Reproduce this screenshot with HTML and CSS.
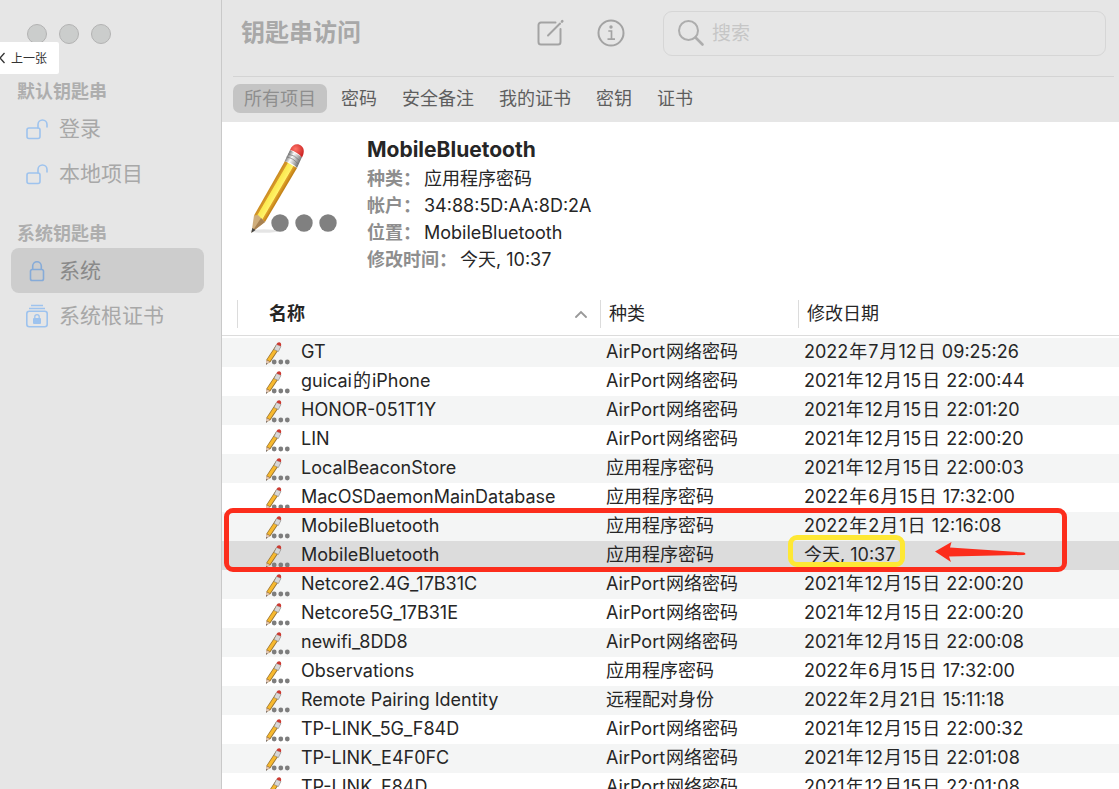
FILE: index.html
```html
<!DOCTYPE html>
<html lang="zh-CN">
<head>
<meta charset="utf-8">
<title>钥匙串访问</title>
<link rel="stylesheet" href="styles.css">
</head>
<body>
<svg class="defs" aria-hidden="true">
  <defs>
    <linearGradient id="wood" gradientUnits="userSpaceOnUse" x1="20.500" y1="46" x2="32.500" y2="53">
      <stop offset="0" stop-color="#c98a1e"/><stop offset=".2" stop-color="#d99a2a"/>
      <stop offset=".26" stop-color="#fbe94f"/><stop offset=".66" stop-color="#fff36a"/>
      <stop offset=".72" stop-color="#e0a12a"/><stop offset="1" stop-color="#b9770f"/>
    </linearGradient>
    <linearGradient id="metal" gradientUnits="userSpaceOnUse" x1="38" y1="14" x2="50" y2="21">
      <stop offset="0" stop-color="#777"/><stop offset=".35" stop-color="#fafafa"/>
      <stop offset=".7" stop-color="#b5b5b5"/><stop offset="1" stop-color="#777"/>
    </linearGradient>
    <radialGradient id="eraser" cx=".4" cy=".35" r=".7">
      <stop offset="0" stop-color="#ff7468"/><stop offset="1" stop-color="#c91f1f"/>
    </radialGradient>
    <symbol id="unlock" viewBox="0 0 24 24">
      <g fill="none" stroke="#9ec3ee" stroke-width="1.6" stroke-linecap="round"><rect x="2" y="11" width="13" height="10.5" rx="2"/><path d="M13 11V7.5a4.5 4.5 0 0 1 9 0V10"/></g>
    </symbol>
    <symbol id="row-icon" viewBox="0 0 25 24">
      <path d="M11 4 15.500 6 5.500 21 1 23.500 1.200 19Z" fill="#96702f"/>
      <path d="M11.600 4.500 14.500 6 4.900 20.300 2.100 18.800Z" fill="#f7b92f"/>
      <path d="M1.200 19 5 21 1 23.500Z" fill="#e0c4b2"/>
      <path d="M1 23.700 1.200 22 2.500 22.700Z" fill="#555"/>
      <path d="M11.500 3.400 16 5.300 13.400 10.500 9 8.500Z" fill="#d8d8d8" stroke="#777" stroke-width=".5"/>
      <path d="M11.500 3.400C12.500 0 17.300.6 16 5.200Z" fill="#cc3a31"/>
      <g fill="#7d7d7d"><circle cx="9.200" cy="21" r="2.400"/><circle cx="15.800" cy="21" r="2.400"/><circle cx="22.300" cy="21" r="2.400"/></g>
    </symbol>
  </defs>
</svg>

<div class="app">
  <aside class="sidebar">
    <div class="lights"><i></i><i></i><i></i></div>
    <nav>
      <h2>默认钥匙串</h2>
      <ul>
        <li><a href="#"><svg class="side-icon"><use href="#unlock"/></svg>登录</a></li>
        <li><a href="#"><svg class="side-icon"><use href="#unlock"/></svg>本地项目</a></li>
      </ul>
      <h2>系统钥匙串</h2>
      <ul>
        <li><a href="#" class="current" aria-current="page"><svg class="side-icon" viewBox="0 0 24 24"><g fill="none" stroke="#86abd8" stroke-width="1.6"><rect x="5.500" y="10.500" width="13" height="11" rx="1.800"/><path d="M7.700 10.500V7a4.300 4.300 0 0 1 8.600 0v3.500"/></g></svg>系统</a></li>
        <li><a href="#"><svg class="side-icon" viewBox="0 0 24 24"><g fill="none" stroke="#9ec3ee"><path d="M6 1.500h12M4 4.500h16" stroke-width="1.300"/><rect x="1.800" y="7.300" width="20.400" height="15.400" rx="2.500" stroke-width="1.600"/><path d="M9.800 14.500v-1.700a2.200 2.200 0 0 1 4.400 0v1.700" stroke-width="1.300"/></g><rect x="8" y="14" width="8" height="6" rx="1" fill="#9ec3ee"/></svg>系统根证书</a></li>
      </ul>
    </nav>
    <button class="previous" type="button"><svg viewBox="0 0 6 12"><path d="M4.500 1 0 6l4.500 5" fill="none" stroke="#333" stroke-width="1.300"/></svg>上一张</button>
  </aside>

  <main class="main">
    <header class="top">
      <div class="toolbar">
        <h1>钥匙串访问</h1>
        <button type="button" class="tool" aria-label="新建"><svg viewBox="0 0 30 30"><g fill="none" stroke="#a3a3a3" stroke-width="2" stroke-linecap="round" stroke-linejoin="round"><path d="M20.500 4.500H6A2.500 2.500 0 0 0 3.500 7v17A2.500 2.500 0 0 0 6 26.500h17a2.500 2.500 0 0 0 2.500-2.500V11"/><path d="M13 17.500 25 5.500"/><path d="M27 3.500l.3-.3" stroke-width="2.600"/></g></svg></button>
        <button type="button" class="tool" aria-label="简介"><svg viewBox="0 0 30 30"><circle cx="15" cy="15" r="12.500" fill="none" stroke="#a3a3a3" stroke-width="2"/><circle cx="15" cy="9" r="1.700" fill="#a3a3a3"/><path d="M12.300 13h3.200v8M11.500 21.200h7.500" fill="none" stroke="#a3a3a3" stroke-width="1.700"/></svg></button>
        <label class="search"><svg viewBox="0 0 28 28"><circle cx="11.500" cy="11.500" r="9.500" fill="none" stroke="#adadad" stroke-width="2"/><path d="M18.500 18.500l7 7" stroke="#adadad" stroke-width="2.600" stroke-linecap="round"/></svg><input type="text" placeholder="搜索" aria-label="搜索"></label>
      </div>
      <div class="tabs">
        <button type="button" class="active">所有项目</button><button type="button">密码</button><button type="button">安全备注</button><button type="button">我的证书</button><button type="button">密钥</button><button type="button">证书</button>
      </div>
    </header>

    <section class="detail">
      <svg class="big-icon" viewBox="0 0 90 92">
        <ellipse cx="15" cy="89" rx="14" ry="1.800" fill="#000" opacity=".1"/>
        <path d="M36 19 48 26 16 80 5 73.500Z" fill="url(#wood)"/>
        <path d="M5 73.500 9 73l3 3 4 4L2.500 90.500Z" fill="#cfae7c"/>
        <path d="M12 76l4 4L2.500 90.500Z" fill="#a88252"/>
        <path d="M2.300 91 3.300 86 6.500 88Z" fill="#444"/>
        <path d="M41 8 53 15 48 26Q43 20 35.500 19.500Z" fill="url(#metal)"/>
        <path d="M39 12q7 1 12 7M37.500 15q7 1 11.500 7" fill="none" stroke="#777" stroke-width=".7"/>
        <path d="M41 8C43 2 49 1 52.500 4S55 12 53 15.500Q48 9.500 41 8Z" fill="url(#eraser)"/>
        <g fill="#808080"><circle cx="31" cy="81" r="8.700"/><circle cx="55" cy="81" r="8.700"/><circle cx="79" cy="81" r="8.700"/></g>
      </svg>
      <div class="facts">
        <h2>MobileBluetooth</h2>
        <dl>
          <div><dt>种类：</dt><dd>应用程序密码</dd></div>
          <div><dt>帐户：</dt><dd>34:88:5D:AA:8D:2A</dd></div>
          <div><dt>位置：</dt><dd>MobileBluetooth</dd></div>
          <div><dt>修改时间：</dt><dd>今天, 10:37</dd></div>
        </dl>
      </div>
    </section>

    <section class="items">
      <table>
        <colgroup><col class="c-name"><col class="c-kind"><col></colgroup>
        <thead><tr><th class="sorted"><span>名称<svg viewBox="0 0 14 8"><path d="M2 7l5-5 5 5" fill="none" stroke="#999" stroke-width="1.800" stroke-linecap="round"/></svg></span></th><th><span>种类</span></th><th><span>修改日期</span></th></tr></thead>
        <tbody>
          <tr><td><svg><use href="#row-icon"/></svg>GT</td><td>AirPort<b>网络密码</b></td><td>2022<b>年</b>7<b>月</b>12<b>日</b> 09:25:26</td></tr>
          <tr><td><svg><use href="#row-icon"/></svg>guicai<b>的</b>iPhone</td><td>AirPort<b>网络密码</b></td><td>2021<b>年</b>12<b>月</b>15<b>日</b> 22:00:44</td></tr>
          <tr><td><svg><use href="#row-icon"/></svg>HONOR-051T1Y</td><td>AirPort<b>网络密码</b></td><td>2021<b>年</b>12<b>月</b>15<b>日</b> 22:01:20</td></tr>
          <tr><td><svg><use href="#row-icon"/></svg>LIN</td><td>AirPort<b>网络密码</b></td><td>2021<b>年</b>12<b>月</b>15<b>日</b> 22:00:20</td></tr>
          <tr><td><svg><use href="#row-icon"/></svg>LocalBeaconStore</td><td>应用程序密码</td><td>2021<b>年</b>12<b>月</b>15<b>日</b> 22:00:03</td></tr>
          <tr><td><svg><use href="#row-icon"/></svg>MacOSDaemonMainDatabase</td><td>应用程序密码</td><td>2022<b>年</b>6<b>月</b>15<b>日</b> 17:32:00</td></tr>
          <tr><td><svg><use href="#row-icon"/></svg>MobileBluetooth</td><td>应用程序密码</td><td>2022<b>年</b>2<b>月</b>1<b>日</b> 12:16:08</td></tr>
          <tr class="selected"><td><svg><use href="#row-icon"/></svg>MobileBluetooth</td><td>应用程序密码</td><td>今天, 10:37</td></tr>
          <tr><td><svg><use href="#row-icon"/></svg>Netcore2.4G_17B31C</td><td>AirPort<b>网络密码</b></td><td>2021<b>年</b>12<b>月</b>15<b>日</b> 22:00:20</td></tr>
          <tr><td><svg><use href="#row-icon"/></svg>Netcore5G_17B31E</td><td>AirPort<b>网络密码</b></td><td>2021<b>年</b>12<b>月</b>15<b>日</b> 22:00:20</td></tr>
          <tr><td><svg><use href="#row-icon"/></svg>newifi_8DD8</td><td>AirPort<b>网络密码</b></td><td>2021<b>年</b>12<b>月</b>15<b>日</b> 22:00:08</td></tr>
          <tr><td><svg><use href="#row-icon"/></svg>Observations</td><td>应用程序密码</td><td>2022<b>年</b>6<b>月</b>15<b>日</b> 17:32:00</td></tr>
          <tr><td><svg><use href="#row-icon"/></svg>Remote Pairing Identity</td><td>远程配对身份</td><td>2022<b>年</b>2<b>月</b>21<b>日</b> 15:11:18</td></tr>
          <tr><td><svg><use href="#row-icon"/></svg>TP-LINK_5G_F84D</td><td>AirPort<b>网络密码</b></td><td>2021<b>年</b>12<b>月</b>15<b>日</b> 22:00:32</td></tr>
          <tr><td><svg><use href="#row-icon"/></svg>TP-LINK_E4F0FC</td><td>AirPort<b>网络密码</b></td><td>2021<b>年</b>12<b>月</b>15<b>日</b> 22:01:08</td></tr>
          <tr><td><svg><use href="#row-icon"/></svg>TP-LINK_F84D</td><td>AirPort<b>网络密码</b></td><td>2021<b>年</b>12<b>月</b>15<b>日</b> 22:01:08</td></tr>
        </tbody>
      </table>
      <div class="mark-red"></div>
      <div class="mark-yellow"></div>
      <svg class="mark-arrow" viewBox="0 0 92 20"><path d="M0 9.500 16.500 0 15 5.500 89 10.500Q92 12 89 13L14 14.500 16 20Z" fill="#fc2d1c"/></svg>
    </section>
  </main>
</div>
</body>
</html>
```

FILE: styles.css
```css
* { box-sizing: border-box; }
body {
  margin: 0;
  font: 18px/27px Inter, "Noto Sans CJK SC", sans-serif;
  color: #262626;
  background: #fff;
}
h1, h2, ul, dl, dd { margin: 0; padding: 0; }
ul { list-style: none; }
button, input { font: inherit; color: inherit; border: 0; padding: 0; background: none; }
a { color: inherit; text-decoration: none; }
svg { display: block; flex: none; }
.defs { position: absolute; width: 0; height: 0; }

.app { display: flex; height: 100vh; overflow: hidden; }

.sidebar {
  position: relative;
  flex: none;
  width: 222px;
  padding: 24px 17px 0 11px;
  background: #e6e6e6;
  border-right: 1px solid #c9c9c9;
  color: #a8a8a8;
}
.lights { display: flex; gap: 12px; padding-left: 16px; margin-bottom: 34px; }
.lights i { width: 20px; height: 20px; border-radius: 50%; background: #cbcdcc; border: 1px solid #b3b3b3; }
.sidebar h2 { padding-left: 6px; font-size: 18px; line-height: 28px; font-weight: 700; color: #aeaeae; }
.sidebar ul { margin-bottom: 24px; }
.sidebar li a {
  display: flex;
  align-items: center;
  gap: 10px;
  height: 45px;
  padding-left: 14px;
  border-radius: 8px;
  font-size: 21px;
}
.sidebar .current { background: #cdcdcd; color: #8a8a8a; }
.side-icon { width: 24px; height: 24px; }
.previous {
  position: absolute;
  left: 0;
  top: 42px;
  display: flex;
  align-items: center;
  gap: 5px;
  width: 59px;
  height: 32px;
  background: #fff;
  color: #333;
  font-size: 12px;
  border-radius: 0 2px 2px 0;
}
.previous svg { width: 6px; height: 12px; }

.main { flex: 1; min-width: 0; }
.top { height: 122px; padding: 0 5px 0 11px; background: #e6e6e6; }
.toolbar { display: flex; align-items: center; height: 77px; padding: 0 8px 10px; border-bottom: 1px solid #d4d4d4; }
.toolbar h1 { flex: none; width: 294px; font-size: 24px; line-height: 36px; font-weight: 700; color: #a8a8a8; }
.tool { width: 30px; height: 30px; margin-right: 31px; }
.tool svg { width: 30px; height: 30px; }
.search {
  flex: 1;
  display: flex;
  align-items: center;
  gap: 7px;
  height: 45px;
  margin-left: 6px;
  padding: 0 13px;
  border: 1px solid #d6d6d6;
  border-radius: 9px;
}
.search svg { width: 28px; height: 28px; }
.search input { flex: 1; min-width: 0; font-size: 19px; outline: 0; }
.search input::placeholder { color: #c6c6c6; opacity: 1; }
.tabs { display: flex; align-items: center; padding-top: 7px; gap: 3px; }
.tabs button { height: 29px; padding: 0 11px; border-radius: 7px; font-size: 18px; line-height: 28px; color: #5e5e5e; }
.tabs .active { background: #c4c4c4; color: #8e8e8e; }

.detail { display: flex; gap: 28px; height: 171px; padding: 12px 27px; }
.big-icon { width: 90px; height: 92px; margin-top: 8px; }
.facts h2 { font-size: 21px; line-height: 31px; font-weight: 700; }
.facts dl div { display: flex; gap: 3px; }
.facts dt { font-weight: 700; color: #8e8e8e; }

.items { position: relative; }
table { width: 100%; table-layout: fixed; border-collapse: collapse; }
.c-name { width: 378px; }
.c-kind { width: 198px; }
th { height: 45px; padding: 0; text-align: left; font-weight: 400; box-shadow: inset 0 -2px #fff, inset 0 -3px #dcdcdc; }
th span { display: flex; align-items: center; justify-content: space-between; height: 28px; margin-bottom: 4px; padding-left: 8px; border-left: 1px solid #dcdcdc; }
.sorted span { margin-left: 15px; padding: 0 12px 0 31px; font-weight: 700; }
.sorted svg { width: 14px; height: 8px; }
td { height: 29px; padding: 0 0 2px 6px; white-space: nowrap; }
td:first-child { padding-left: 79px; }
td svg { float: left; width: 25px; height: 24px; margin: 3px 0 -4px -36px; }
td b { font-weight: 400; margin: 0 1px; }
tbody tr:nth-child(odd) { background: #f4f5f5; }
tbody tr.selected { background: #dcdcdc; }

.mark-red { position: absolute; left: 2px; top: 215px; width: 843px; height: 64px; border: 5px solid #fc2d1c; border-radius: 9px; }
.mark-yellow { position: absolute; left: 566px; top: 242px; width: 117px; height: 32px; border: 5px solid #fee834; border-radius: 9px; }
.mark-arrow { position: absolute; left: 713px; top: 249px; width: 92px; height: 20px; }
```
